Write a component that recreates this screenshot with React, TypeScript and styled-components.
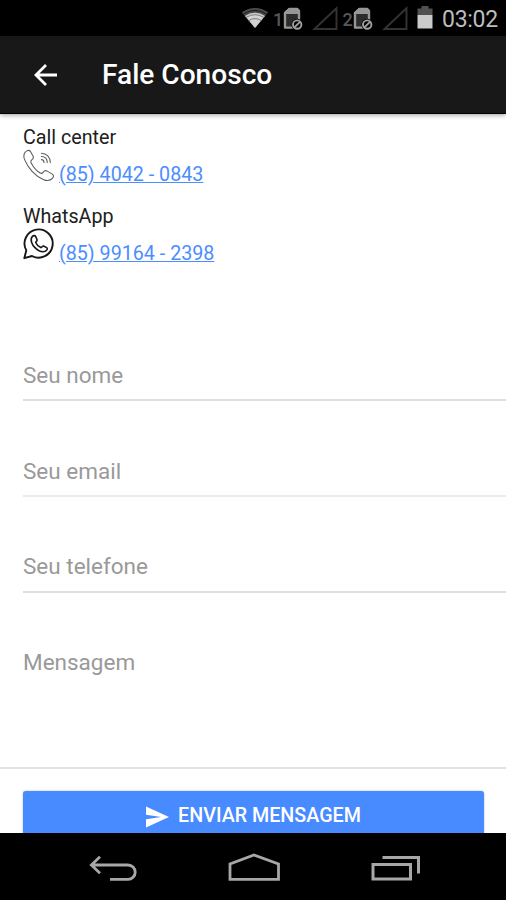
import React from 'react'
import styled, {createGlobalStyle} from 'styled-components'

// types
type FieldType = {
    placeholder: string
    lineColor: string
    offset: number
}

type ContactType = {
    title: string
    phone: string
    icon: React.ReactNode
}

const fields: FieldType[] = [
    {placeholder: 'Seu nome', lineColor: '#dedede', offset: 46},
    {placeholder: 'Seu email', lineColor: '#ebebeb', offset: 46},
    {placeholder: 'Seu telefone', lineColor: '#dedede', offset: 44},
]

// icons
const WifiIcon = () => (
    <svg width="28" height="36" viewBox="0 0 28 36">
        <path d="M0.8 12.2Q14 3.6 27.2 12.2L14 28Z" fill="#4c4c4c"/>
        <path d="M4 16Q14 9.4 24 16L14 28Z" fill="#d2d2d2"/>
        <path d="M2.6 13.9Q14 6.8 25.4 13.9" fill="none" stroke="#111" strokeWidth="0.9"/>
        <path d="M5 17.4Q14 12 23 17.4M7.6 20.6Q14 16.6 20.4 20.6" fill="none" stroke="#666" strokeWidth="0.8"/>
    </svg>
)

const SimIcon = () => (
    <svg width="20" height="36" viewBox="0 0 20 36">
        <path d="M6.5 9H14.2L16 11V27.6H2V13Z" fill="#2c2c2c" stroke="#979797" strokeWidth="2.4" strokeLinejoin="round"/>
        <path d="M6 8H14.5L17 10.5V14H1V12.8Z" fill="#979797"/>
        <circle cx="14.2" cy="24.6" r="5.8" fill="#000"/>
        <circle cx="14.2" cy="24.6" r="4.2" fill="none" stroke="#a0a0a0" strokeWidth="1.9"/>
        <path d="M11.4 27.4L17 21.8" stroke="#a0a0a0" strokeWidth="1.9"/>
    </svg>
)

const SignalIcon = () => (
    <svg width="26" height="36" viewBox="0 0 26 36">
        <path d="M2.5 29L24.5 8.2V29Z" fill="none" stroke="#333" strokeWidth="1.9"/>
    </svg>
)

const BatteryIcon = () => (
    <svg width="16" height="36" viewBox="0 0 16 36">
        <path d="M4.5 6H11.5V8.5H15.5V15H0.5V8.5H4.5Z" fill="#505050"/>
        <path d="M0.5 15H15.5V28.5H0.5Z" fill="#cacaca"/>
    </svg>
)

const ArrowIcon = () => (
    <svg width="24" height="24" viewBox="0 0 24 24">
        <path d="M24 12H3.5M13 2L3 12L13 22" fill="none" stroke="#fff" strokeWidth="2.8"/>
    </svg>
)

const PhoneIcon = () => (
    <svg width="32" height="34" viewBox="0 0 32 34" fill="none" stroke="#5c5c5c" strokeWidth="1.05" strokeLinejoin="round" strokeLinecap="round">
        <path d="M2.2 3.2C3.6 1.2 6 0.7 7.5 2.4L10.1 7.2C10.8 8.8 10.1 10 8.8 10.8C7.5 11.8 7.6 12.7 8.2 14C10.5 18.6 13.2 21.7 17.2 24C18.6 24.8 19.5 24.4 20.3 23.1C21.3 21.6 22.8 21.3 24.3 22.1L29.3 25.1C30.9 26.2 30.8 27.7 29.6 29.2C27.5 31.6 24.2 32.1 20.7 30.7C12 27.1 4.8 18.8 1.5 10.4C0.4 7.5 0.7 5.1 2.2 3.2Z"/>
        <path d="M18.4 4.2C23.6 4.2 27.3 8.2 27.3 13.6M18.4 7.4C22 7.4 24.2 9.8 24.2 13.6M18.4 10.6C20.2 10.6 21 11.8 21 13.6"/>
    </svg>
)

const WhatsAppIcon = () => (
    <svg width="32" height="34" viewBox="0 0 32 34" fill="none" stroke="#181818" strokeLinejoin="round">
        <path d="M1.3 30.2L3.3 22.4A14.1 14.1 0 1 1 9 28Z" strokeWidth="1.9"/>
        <path d="M9.3 8.6C10.4 7.4 12 7.2 12.7 8.6L14.1 11.8C14.5 12.8 12.7 13.9 12.7 14.5C13.7 16.9 15.4 18.5 17.8 19.6C18.7 19.9 19.5 17.7 20.5 18L23.7 19.6C25.1 20.4 23.8 22.7 22.3 23.3C19 24.5 14.8 22.4 12 19.6C9 16.6 6.7 11.7 9.3 8.6Z" strokeWidth="1.6"/>
    </svg>
)

const SendIcon = () => (
    <svg width="24" height="22" viewBox="0 0 24 22">
        <path d="M0 0.5L23 11L0 21.5V13.2L15 11L0 8.8Z" fill="#fff"/>
    </svg>
)

const BackIcon = () => (
    <svg width="50" height="34" viewBox="0 0 50 34" fill="none" stroke="#a7a7a7" strokeWidth="2.8">
        <path d="M3.5 13H40A7.2 7.2 0 0 1 40 27.4H22M12 4.8L3.4 13L12 21.2"/>
    </svg>
)

const HomeIcon = () => (
    <svg width="54" height="34" viewBox="0 0 54 34" fill="none" stroke="#a7a7a7" strokeWidth="2.8">
        <path d="M2 27.3V12L26 2.9L50.5 12V27.3Z"/>
    </svg>
)

const RecentIcon = () => (
    <svg width="50" height="34" viewBox="0 0 50 34" fill="none" stroke="#a7a7a7" strokeWidth="3">
        <path d="M2 12.5H39.5V27H2ZM11.5 5.5H47.5V21.5"/>
    </svg>
)

const Contact = (props: ContactType) => {
    return (
        <ContactBlock>
            <ContactTitle>{props.title}</ContactTitle>
            <ContactRow>
                {props.icon}
                <PhoneLink href="#">{props.phone}</PhoneLink>
            </ContactRow>
        </ContactBlock>
    )
}

const App = () => {
    return (
        <>
            <GlobalStyle/>
            <Screen>
                <StatusBar>
                    <WifiIcon/>
                    <SimNumber $left={4}>1</SimNumber>
                    <SimIcon/>
                    <SignalGap $width={8.5}/>
                    <SignalIcon/>
                    <SimNumber $left={5}>2</SimNumber>
                    <SimIcon/>
                    <SignalGap $width={9}/>
                    <SignalIcon/>
                    <SignalGap $width={9.5}/>
                    <BatteryIcon/>
                    <Clock>03:02</Clock>
                </StatusBar>

                <Header>
                    <ArrowIcon/>
                    <Title>Fale Conosco</Title>
                </Header>

                <Content>
                    <Contacts>
                        <Contact title="Call center" phone="(85) 4042 - 0843" icon={<PhoneIcon/>}/>
                        <Contact title="WhatsApp" phone="(85) 99164 - 2398" icon={<WhatsAppIcon/>}/>
                    </Contacts>

                    <Form>
                        {fields.map((field) =>
                            <Input
                                key={field.placeholder}
                                placeholder={field.placeholder}
                                $line={field.lineColor}
                                $offset={field.offset}
                            />
                        )}
                        <Message placeholder="Mensagem"/>
                    </Form>

                    <Footer>
                        <SendButton>
                            <SendIcon/>
                            <span>ENVIAR MENSAGEM</span>
                        </SendButton>
                    </Footer>
                </Content>

                <NavBar>
                    <BackIcon/>
                    <HomeIcon/>
                    <RecentIcon/>
                </NavBar>
            </Screen>
        </>
    )
}

export default App

// styles
const GlobalStyle = createGlobalStyle`
  * {
    box-sizing: border-box;
  }

  body {
    margin: 0;
    font-family: Roboto, "Liberation Sans", sans-serif;
  }

  svg {
    display: block;
    flex-shrink: 0;
  }
`

const Screen = styled.div`
  display: flex;
  flex-direction: column;
  width: 506px;
  height: 900px;
  overflow: hidden;
  background-color: #fff;
`

const StatusBar = styled.div`
  display: flex;
  flex-shrink: 0;
  align-items: center;
  height: 36px;
  padding-left: 241px;
  background-color: #000;
`

const SimNumber = styled.span<{ $left: number }>`
  width: 10px;
  margin-left: ${props => props.$left}px;
  padding-top: 4px;
  color: #585858;
  font-size: 18px;
  font-weight: 500;
  line-height: 20px;
`

const SignalGap = styled.span<{ $width: number }>`
  width: ${props => props.$width}px;
`

const Clock = styled.span`
  margin-left: 9px;
  padding-top: 2px;
  color: #bdbdbd;
  font-size: 23px;
  letter-spacing: -0.3px;
`

const Header = styled.header`
  display: flex;
  flex-shrink: 0;
  align-items: center;
  height: 78px;
  padding-left: 33px;
  background-color: #181818;
  border-bottom: 1px solid #000;
  box-shadow: 0 1px 5px rgba(0, 0, 0, 0.4);
  z-index: 1;
`

const Title = styled.h1`
  margin: 0 0 0 45px;
  color: #fff;
  font-size: 28.1px;
  font-weight: 500;
`

const Content = styled.main`
  display: flex;
  flex-direction: column;
  flex: 1;
  min-height: 0;
  overflow: hidden;
`

const Contacts = styled.section`
  display: flex;
  flex-direction: column;
  flex-shrink: 0;
  height: 191px;
  padding: 11px 23px 0;
`

const ContactBlock = styled.div`
  height: 79px;
`

const ContactTitle = styled.div`
  height: 24px;
  color: #202020;
  font-size: 19.7px;
  line-height: 26px;
`

const ContactRow = styled.div`
  display: flex;
  gap: 4px;
`

const PhoneLink = styled.a`
  padding-top: 14px;
  color: #4c8dff;
  font-size: 19.7px;
  line-height: 24px;
  white-space: nowrap;
`

const Form = styled.form`
  display: flex;
  flex-direction: column;
  flex-shrink: 0;
  height: 464px;
  border-bottom: 2px solid #e2e2e2;
`

const Input = styled.input<{ $line: string, $offset: number }>`
  height: 96px;
  margin-left: 23px;
  padding: ${props => props.$offset}px 0 0;
  border: 0;
  border-bottom: 2px solid ${props => props.$line};
  outline: none;
  font-family: inherit;
  font-size: 22.5px;

  &::placeholder {
    color: #999;
  }
`

const Message = styled.textarea`
  flex: 1;
  margin-left: 23px;
  padding: 56px 0 0;
  border: 0;
  outline: none;
  resize: none;
  font-family: inherit;
  font-size: 22.5px;
  line-height: 26px;

  &::placeholder {
    color: #999;
  }
`

const Footer = styled.footer`
  flex-shrink: 0;
  padding: 22px 22px 0 23px;
`

const SendButton = styled.button`
  display: flex;
  align-items: center;
  justify-content: center;
  gap: 8px;
  width: 100%;
  height: 51px;
  padding: 0;
  border: 0;
  border-radius: 3px;
  background-color: #488aff;
  box-shadow: 0 0 2px rgba(0, 60, 180, 0.4);
  color: #fff;
  font-family: inherit;
  font-size: 19.7px;
  font-weight: 500;

  span {
    padding-bottom: 3px;
  }
`

const NavBar = styled.nav`
  display: flex;
  flex-shrink: 0;
  align-items: center;
  justify-content: space-between;
  height: 67px;
  padding: 4px 85px 0 88px;
  background-color: #000;
`
